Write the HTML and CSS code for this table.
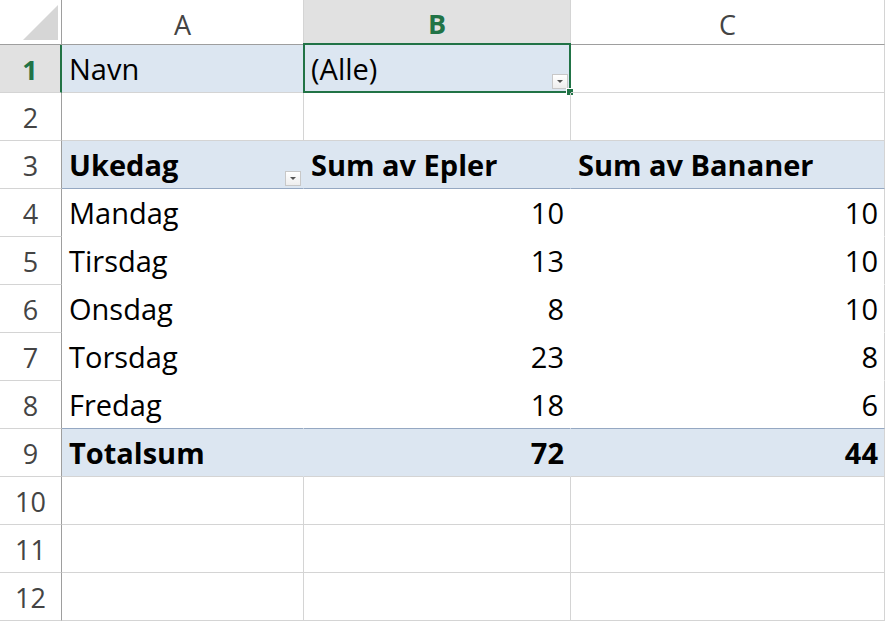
FILE: index.html
```html
<!DOCTYPE html>
<html>
<head>
<meta charset="utf-8">
<link rel="stylesheet" href="styles.css">
</head>
<body>
<div class="sheet">
  <div class="corner"><svg width="62" height="44" viewBox="0 0 62 44"><polygon points="58,5 58,40 23,40" fill="#d6d6d6"/></svg></div>
  <div class="colhead">A</div>
  <div class="colhead sel">B</div>
  <div class="colhead last">C</div>

  <div class="rowhead sel">1</div>
  <div class="cell pv">Navn</div>
  <div class="cell pv b1">(Alle)<span class="dd"></span><span class="selbox"></span><span class="handle"></span></div>
  <div class="cell last"></div>

  <div class="rowhead">2</div>
  <div class="cell"></div>
  <div class="cell"></div>
  <div class="cell last"></div>

  <div class="rowhead">3</div>
  <div class="cell pv hdr nv bold">Ukedag<span class="dd dd2"></span></div>
  <div class="cell pv hdr nv bold">Sum av Epler</div>
  <div class="cell pv hdr last bold">Sum av Bananer</div>

  <div class="rowhead">4</div>
  <div class="cell in nv">Mandag</div>
  <div class="cell in nv num">10</div>
  <div class="cell in last num">10</div>

  <div class="rowhead">5</div>
  <div class="cell in nv">Tirsdag</div>
  <div class="cell in nv num">13</div>
  <div class="cell in last num">10</div>

  <div class="rowhead">6</div>
  <div class="cell in nv">Onsdag</div>
  <div class="cell in nv num">8</div>
  <div class="cell in last num">10</div>

  <div class="rowhead">7</div>
  <div class="cell in nv">Torsdag</div>
  <div class="cell in nv num">23</div>
  <div class="cell in last num">8</div>

  <div class="rowhead">8</div>
  <div class="cell in nv lastin">Fredag</div>
  <div class="cell in nv num lastin">18</div>
  <div class="cell in last num lastin">6</div>

  <div class="rowhead">9</div>
  <div class="cell pv tot nv bold">Totalsum</div>
  <div class="cell pv tot nv num bold">72</div>
  <div class="cell pv tot last num bold">44</div>

  <div class="rowhead">10</div>
  <div class="cell"></div>
  <div class="cell"></div>
  <div class="cell last"></div>

  <div class="rowhead">11</div>
  <div class="cell"></div>
  <div class="cell"></div>
  <div class="cell last"></div>

  <div class="rowhead">12</div>
  <div class="cell"></div>
  <div class="cell"></div>
  <div class="cell last"></div>
</div>
</body>
</html>
```

FILE: styles.css
```css
html, body {
  margin: 0;
  padding: 0;
  background: #ffffff;
  overflow: hidden;
}

.sheet {
  display: grid;
  grid-template-columns: 62px 242px 267px 314px;
  grid-template-rows: 45px repeat(12, 48px);
  font-family: "Open Sans", "Noto Sans", sans-serif;
  color: #000;
}

.corner {
  box-sizing: border-box;
  border-right: 1px solid #9e9e9e;
  border-bottom: 1px solid #9e9e9e;
  background: #fff;
}
.corner svg { display: block; }

.colhead {
  box-sizing: border-box;
  border-right: 1px solid #d4d4d4;
  border-bottom: 1px solid #9e9e9e;
  display: flex;
  align-items: center;
  justify-content: center;
  font-size: 27px;
  color: #444;
  padding-top: 4px;
}
.colhead.sel {
  background: #e1e1e1;
  color: #217346;
  font-weight: bold;
  border-bottom: 2px solid #217346;
}
.colhead.last { border-right: 1px solid #d4d4d4; }

.rowhead {
  box-sizing: border-box;
  border-right: 1px solid #9e9e9e;
  border-bottom: 1px solid #d4d4d4;
  display: flex;
  align-items: center;
  justify-content: center;
  padding-top: 2px;
  font-size: 27px;
  color: #444;
}
.rowhead.sel {
  background: #e1e1e1;
  color: #217346;
  font-weight: bold;
  border-right: 2px solid #217346;
}

.cell {
  box-sizing: border-box;
  position: relative;
  border-right: 1px solid #d4d4d4;
  border-bottom: 1px solid #d4d4d4;
  display: flex;
  align-items: flex-end;
  padding: 0 6px 6px 7px;
  font-size: 29px;
  line-height: 34px;
  white-space: nowrap;
}
.cell.last { border-right: 1px solid #d4d4d4; }
.cell.pv { background: #dce6f1; }
.cell.nv { border-right-color: transparent; }
.cell.pv.nv { border-right-color: #dce6f1; }
.cell.hdr { border-bottom: 1px solid #95a8c2; }
.cell.in { border-bottom-color: #fff; }
.cell.in.lastin { border-bottom: 1px solid #95a8c2; }
.cell.tot { border-bottom-color: #d4d4d4; }
.cell.num { justify-content: flex-end; }
.cell.bold { font-weight: bold; }

.cell.b1 { border-right-color: #d4d4d4; }

.dd {
  position: absolute;
  right: 2px;
  bottom: 3px;
  width: 16px;
  height: 15px;
  box-sizing: border-box;
  border: 1px solid #c8c8c8;
  background: linear-gradient(#ffffff, #eeeeee);
}
.dd::after {
  content: "";
  position: absolute;
  left: 4px;
  top: 5px;
  border-left: 3px solid transparent;
  border-right: 3px solid transparent;
  border-top: 3px solid #555;
}
.dd2 { right: 2px; bottom: 2px; }

.selbox {
  position: absolute;
  left: -1px;
  top: -2px;
  right: -1px;
  bottom: -1px;
  border: 2px solid #217346;
  pointer-events: none;
}
.handle {
  position: absolute;
  right: -4px;
  bottom: -4px;
  width: 6px;
  height: 6px;
  background: #217346;
  border: 1px solid #fff;
}
```
